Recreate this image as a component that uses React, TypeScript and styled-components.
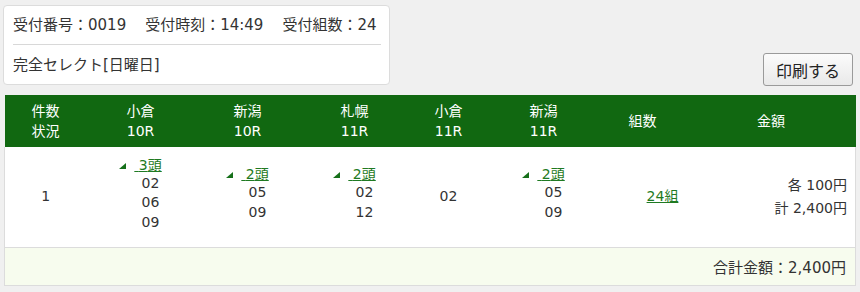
import React from "react";
import styled, { createGlobalStyle } from "styled-components";

const GlobalStyle = createGlobalStyle`
  html, body {
    margin: 0;
    padding: 0;
    background: #f0f0f0;
  }
  body {
    font-family: "DejaVu Sans", "Noto Sans CJK JP", sans-serif;
    color: #333;
  }
`;

const Page = styled.div`
  padding: 5px 5px 0 3px;
`;

const Top = styled.div`
  display: flex;
  justify-content: space-between;
  align-items: flex-end;
`;

const Card = styled.div`
  box-sizing: border-box;
  width: 387px;
  height: 80px;
  padding: 8px 8px 8px 9px;
  background: #fff;
  border: 1px solid #dcdcdc;
  border-radius: 4px;
  font-size: 15px;
  line-height: 22px;
`;

const InfoLine = styled.div`
  display: flex;
  padding-bottom: 8px;
  border-bottom: 1px solid #d8d8d8;
  margin-bottom: 9px;
  white-space: nowrap;
`;

const InfoItem = styled.span`
  & + & {
    margin-left: 19px;
  }
`;

const BetType = styled.div`
  white-space: nowrap;
`;

const PrintButton = styled.button`
  box-sizing: border-box;
  width: 90px;
  height: 33px;
  margin: 0 2px -1px 0;
  padding: 0;
  font-family: inherit;
  font-size: 16px;
  color: #222;
  background: linear-gradient(#fbfbfb, #e9e9e9);
  border: 1px solid #9a9a9a;
  border-radius: 3px;
  cursor: pointer;
`;

const Table = styled.table`
  width: 851px;
  margin: 10px 0 0 1px;
  table-layout: fixed;
  border-collapse: collapse;
  font-size: 14px;
`;

const HeadCell = styled.th`
  padding: 6px 0;
  background: #116811;
  color: #fff;
  font-weight: normal;
  line-height: 20px;
  text-align: center;
  vertical-align: middle;
`;

const BodyRow = styled.tr`
  background: #fff;
  border-left: 1px solid #dcdcdc;
  border-right: 1px solid #dcdcdc;
  border-bottom: 1px solid #dcdcdc;
`;

type Align = "center" | "right";

const BodyCell = styled.td<{ $align?: Align; $padLeft?: number; $padRight?: number; $padBottom?: number }>`
  height: 100px;
  box-sizing: border-box;
  padding: 0 ${(p) => p.$padRight ?? 0}px ${(p) => p.$padBottom ?? 0}px ${(p) => p.$padLeft ?? 0}px;
  text-align: ${(p) => p.$align ?? "center"};
  vertical-align: middle;
  line-height: 19.5px;
`;

const HorseHead = styled.div`
  line-height: 18px;
  white-space: nowrap;
`;

const Triangle = styled.span`
  display: inline-block;
  width: 0;
  height: 0;
  margin-right: 8px;
  border-left: 7px solid transparent;
  border-bottom: 6px solid #16701a;
  vertical-align: 1px;
`;

const GreenLink = styled.a`
  color: #1f7a22;
  text-decoration: underline;
  cursor: pointer;
`;

const HorseList = styled.div`
  padding-left: 20px;
`;

const AmountLine = styled.div`
  line-height: 23px;
  white-space: nowrap;
`;

const FooterRow = styled.tr`
  background: #f7fcee;
  border: 1px solid #dcdcdc;
`;

const FooterCell = styled.td`
  height: 38px;
  box-sizing: border-box;
  padding: 0 9px 0 0;
  text-align: right;
  font-size: 15px;
`;

type Race = { venue: string; race: string; horses: string[] };

const races: Race[] = [
  { venue: "小倉", race: "10R", horses: ["02", "06", "09"] },
  { venue: "新潟", race: "10R", horses: ["05", "09"] },
  { venue: "札幌", race: "11R", horses: ["02", "12"] },
  { venue: "小倉", race: "11R", horses: ["02"] },
  { venue: "新潟", race: "11R", horses: ["05", "09"] },
];

const colWidths = [82, 108, 106, 108, 80, 110, 88, 169];

function HorseCell({ horses }: { horses: string[] }) {
  if (horses.length === 1) {
    return <BodyCell>{horses[0]}</BodyCell>;
  }
  return (
    <BodyCell $padBottom={6}>
      <HorseHead>
        <Triangle />
        <GreenLink>{"\u00a0"}{horses.length}頭</GreenLink>
      </HorseHead>
      <HorseList>
        {horses.map((h) => (
          <div key={h}>{h}</div>
        ))}
      </HorseList>
    </BodyCell>
  );
}

export default function App() {
  return (
    <>
      <GlobalStyle />
      <Page>
        <Top>
          <Card>
            <InfoLine>
              <InfoItem>受付番号：0019</InfoItem>
              <InfoItem>受付時刻：14:49</InfoItem>
              <InfoItem>受付組数：24</InfoItem>
            </InfoLine>
            <BetType>完全セレクト[日曜日]</BetType>
          </Card>
          <PrintButton type="button">印刷する</PrintButton>
        </Top>
        <Table>
          <colgroup>
            {colWidths.map((w, i) => (
              <col key={i} style={{ width: w }} />
            ))}
          </colgroup>
          <thead>
            <tr>
              <HeadCell>
                件数
                <br />
                状況
              </HeadCell>
              {races.map((r, i) => (
                <HeadCell key={i}>
                  {r.venue}
                  <br />
                  {r.race}
                </HeadCell>
              ))}
              <HeadCell>組数</HeadCell>
              <HeadCell>金額</HeadCell>
            </tr>
          </thead>
          <tbody>
            <BodyRow>
              <BodyCell>1</BodyCell>
              {races.map((r, i) => (
                <HorseCell key={i} horses={r.horses} />
              ))}
              <BodyCell $padLeft={40}>
                <GreenLink>24組</GreenLink>
              </BodyCell>
              <BodyCell $align="right" $padRight={8}>
                <AmountLine>各 100円</AmountLine>
                <AmountLine>計 2,400円</AmountLine>
              </BodyCell>
            </BodyRow>
            <FooterRow>
              <FooterCell colSpan={8}>合計金額：2,400円</FooterCell>
            </FooterRow>
          </tbody>
        </Table>
      </Page>
    </>
  );
}
